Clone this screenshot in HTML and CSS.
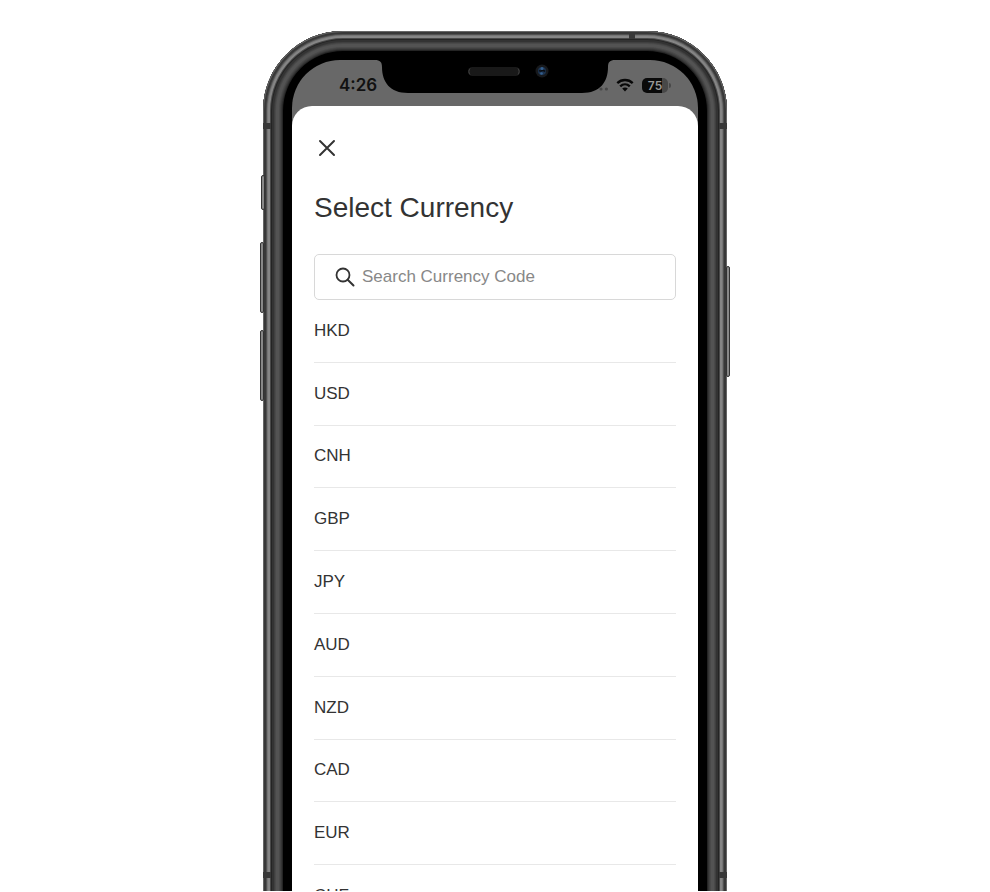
FILE: index.html
```html
<!DOCTYPE html>
<html lang="en">
  <head>
    <meta charset="UTF-8" />
    <meta name="viewport" content="width=device-width, initial-scale=1.0" />
    <title>Select Currency</title>
    <link rel="stylesheet" href="styles.css">
  </head>
  <body>
    <div class="stage">
      <div class="phone">
        <span class="side-button mute"></span>
        <span class="side-button volume-up"></span>
        <span class="side-button volume-down"></span>
        <span class="side-button power"></span>
        <span class="seam seam-top"></span>
        <span class="seam seam-left"></span>
        <span class="seam seam-right"></span>
        <span class="seam seam-left seam-low"></span>
        <span class="seam seam-right seam-low"></span>

        <svg class="notch" width="240" height="43" viewBox="0 0 240 43" aria-hidden="true">
          <path d="M0 2H240V10C235 10 233 12 233 17C233 32 225 43 207 43H33C15 43 7 32 7 17C7 12 5 10 0 10Z" fill="#000" />
          <rect x="93" y="17" width="52" height="9" rx="4.500" fill="#191919" />
          <path d="M95 18.500C93.500 20 93.500 23 95 24.500M143 18.500C144.500 20 144.500 23 143 24.500" fill="none" stroke="#444" />
          <circle cx="167" cy="21" r="6.500" fill="#17191c" />
          <circle cx="167" cy="21" r="4" fill="#1c3350" />
          <path d="M164 20.500C166 22 168 19 170 21.500" fill="none" stroke="#0a0c10" stroke-width="1.500" />
          <circle cx="167" cy="18.500" r="1.500" fill="#35608f" />
          <circle cx="166.500" cy="23.500" r="1.300" fill="#35608f" />
        </svg>

        <div class="screen">
          <div class="status-bar">
            <span class="time">4:26</span>
            <div class="status-icons">
              <svg width="9" height="18" viewBox="0 0 9 18" aria-hidden="true">
                <circle cx="2" cy="13" r="1.600" fill="#484848" />
                <circle cx="7.400" cy="13" r="1.600" fill="#484848" />
              </svg>
              <svg width="18" height="14" viewBox="0 0 18 14" aria-hidden="true">
                <path d="M1.300 5.200C5.600 1 12.400 1 16.700 5.200" fill="none" stroke="#080808" stroke-width="2.400" />
                <path d="M4.200 8.300C7 5.700 11 5.700 13.800 8.300" fill="none" stroke="#080808" stroke-width="2.400" />
                <path d="M9 13.500L6.200 10.600C7.800 9.200 10.200 9.200 11.800 10.600Z" fill="#080808" />
              </svg>
              <div class="battery"><span>75</span></div>
            </div>
          </div>

          <main class="sheet">
            <button class="close" type="button" aria-label="Close">
              <svg width="18" height="18" viewBox="0 0 18 18" aria-hidden="true">
                <path d="M2 2L16 16M16 2L2 16" fill="none" stroke="#333" stroke-width="2" stroke-linecap="round" />
              </svg>
            </button>
            <h1>Select Currency</h1>
            <label class="search">
              <svg width="20" height="20" viewBox="0 0 20 20" aria-hidden="true">
                <circle cx="8" cy="8" r="6.500" fill="none" stroke="#333" stroke-width="1.800" />
                <path d="M12.700 12.700L18.500 18.500" fill="none" stroke="#333" stroke-width="2" stroke-linecap="round" />
              </svg>
              <input type="text" placeholder="Search Currency Code" aria-label="Search Currency Code" />
            </label>
            <ul class="currencies">
              <li>HKD</li>
              <li>USD</li>
              <li>CNH</li>
              <li>GBP</li>
              <li>JPY</li>
              <li>AUD</li>
              <li>NZD</li>
              <li>CAD</li>
              <li>EUR</li>
              <li>CHF</li>
            </ul>
          </main>
        </div>
      </div>
    </div>
  </body>
</html>
```

FILE: styles.css
```css
* {
  box-sizing: border-box;
}

body {
  margin: 0;
  background: #fff;
  color: #333;
  font-family: "Liberation Sans", Arial, sans-serif;
  font-size: 17px;
}

/* The phone runs off the bottom of the window */
.stage {
  height: calc(100vh - 1px);
  padding-top: 31px;
  overflow: hidden;
}

/* Metal frame, drawn as rings from the outer edge inwards */
.phone {
  position: relative;
  max-width: 464px;
  margin: 0 auto;
  padding: 29px 29px 0;
  border-radius: 80px 80px 0 0;
  background: #000;
}

.phone::before {
  content: "";
  position: absolute;
  inset: 0 0 -40px;
  border-radius: 80px 80px 0 0;
  box-shadow:
    inset 0 0 0 1px #666,
    inset 0 0 0 3px #383838,
    inset 0 0 0 4px #505050,
    inset 0 0 0 5px #757575,
    inset 0 0 0 7px #858585,
    inset 0 0 0 8px #484848,
    inset 0 0 0 9px #242424,
    inset 0 0 0 11px #333,
    inset 0 0 0 12px #404040,
    inset 0 0 0 13px #4a4a4a,
    inset 0 0 0 16px #535353,
    inset 0 0 0 17px #4a4a4a,
    inset 0 0 0 18px #404040,
    inset 0 0 0 19px #343434,
    inset 0 0 0 20px #242424;
}

.side-button {
  position: absolute;
  left: -3px;
  width: 4px;
  border: 1px solid #333;
  border-radius: 2px;
  background: #888;
}

.mute {
  top: 144px;
  left: -2px;
  height: 35px;
}

.volume-up {
  top: 211px;
  height: 71px;
}

.volume-down {
  top: 299px;
  height: 71px;
}

.power {
  top: 235px;
  right: -3px;
  left: auto;
  height: 111px;
}

.seam {
  position: absolute;
  width: 8px;
  height: 6px;
  background: #383838;
}

.seam-top {
  top: 1px;
  right: 92px;
  width: 6px;
  height: 7px;
}

.seam-left {
  top: 92px;
  left: 0;
}

.seam-right {
  top: 92px;
  right: 0;
}

.seam-low {
  top: 841px;
}

.notch {
  position: absolute;
  z-index: 1;
  top: 19px;
  left: 50%;
  transform: translateX(-50%);
}

.screen {
  position: relative;
  overflow: hidden;
  border-radius: 48px 48px 0 0;
  background: #686868;
}

.status-bar {
  display: flex;
  justify-content: space-between;
  align-items: center;
  height: 46px;
  padding: 4px 30px 0 47px;
  color: #111;
}

.time {
  font-family: Inter, "Liberation Sans", sans-serif;
  font-weight: 600;
}

.status-icons {
  display: flex;
  align-items: center;
  gap: 8px;
}

.battery {
  position: relative;
  width: 26px;
  height: 15px;
  border-radius: 5px;
  background: linear-gradient(to right, #0a0a0a 20px, #484848 20px);
  color: #999;
  font-family: Inter, "Liberation Sans", sans-serif;
  font-size: 12px;
  font-weight: 600;
  line-height: 15px;
  text-align: center;
}

.battery::after {
  content: "";
  position: absolute;
  top: 5px;
  right: -3px;
  width: 2px;
  height: 5px;
  border-radius: 0 2px 2px 0;
  background: #484848;
}

.sheet {
  padding: 28px 22px 0;
  border-radius: 20px 20px 0 0;
  background: #fff;
}

.close {
  display: flex;
  justify-content: center;
  align-items: center;
  width: 26px;
  height: 28px;
  padding: 0;
  border: none;
  background: none;
  cursor: pointer;
}

h1 {
  margin: 28px 0;
  font-size: 28px;
  font-weight: 400;
  line-height: 36px;
}

.search {
  display: flex;
  align-items: center;
  gap: 7px;
  height: 46px;
  padding: 0 20px;
  border: 1px solid #d8d8d8;
  border-radius: 5px;
}

.search input {
  flex: 1;
  min-width: 0;
  padding: 0;
  border: none;
  outline: none;
  background: none;
  color: #333;
  font: inherit;
}

.search input::placeholder {
  color: #888;
}

/* Ten equal rows */
.currencies {
  display: grid;
  grid-auto-rows: 1fr;
  height: 628px;
  margin: 0;
  padding: 0;
  list-style: none;
}

.currencies li {
  display: flex;
  align-items: center;
  border-bottom: 1px solid #e8e8e8;
}
```
